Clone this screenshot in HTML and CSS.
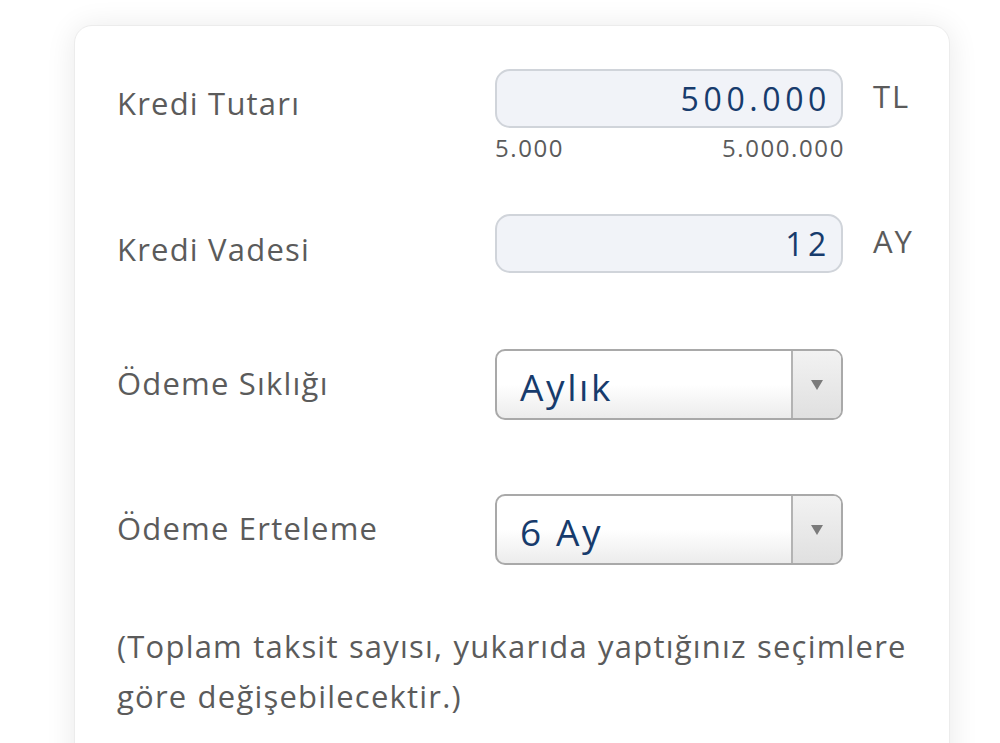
FILE: index.html
```html
<!DOCTYPE html>
<html lang="tr">
<head>
<meta charset="utf-8">
<link rel="stylesheet" href="styles.css">
</head>
<body>
<div class="card">
  <div class="row row-amount">
    <div class="label">Kredi Tutarı</div>
    <div class="control">
      <div class="input">500.000</div>
      <div class="range"><span>5.000</span><span>5.000.000</span></div>
    </div>
    <div class="unit">TL</div>
  </div>
  <div class="row row-term">
    <div class="label">Kredi Vadesi</div>
    <div class="control">
      <div class="input">12</div>
    </div>
    <div class="unit">AY</div>
  </div>
  <div class="row row-select">
    <div class="label">Ödeme Sıklığı</div>
    <div class="control">
      <div class="select"><span class="sel-text">Aylık</span><span class="sel-btn"><span class="tri"></span></span></div>
    </div>
  </div>
  <div class="row row-select">
    <div class="label">Ödeme Erteleme</div>
    <div class="control">
      <div class="select"><span class="sel-text">6 Ay</span><span class="sel-btn"><span class="tri"></span></span></div>
    </div>
  </div>
  <p class="note">(Toplam taksit sayısı, yukarıda yaptığınız seçimlere göre değişebilecektir.)</p>
</div>
</body>
</html>
```
FILE: styles.css
```css
html, body {
  margin: 0;
  padding: 0;
  background: #ffffff;
}
body {
  font-family: "Open Sans", "Liberation Sans", sans-serif;
  width: 1000px;
  height: 743px;
  overflow: hidden;
}
.card {
  margin: 25px 0 0 74px;
  width: 876px;
  height: 760px;
  box-sizing: border-box;
  border: 1px solid #ececec;
  border-radius: 18px;
  background: #fff;
  box-shadow: 0 2px 30px rgba(0,0,0,0.09);
  padding: 43px 0 0 42px;
}
.row {
  display: flex;
  align-items: flex-start;
}
.label {
  width: 378px;
  font-size: 31px;
  line-height: 40px;
  color: #5b5b5b;
  letter-spacing: 1.2px;
}
.control {
  width: 348px;
}
.unit {
  margin-left: 30px;
  font-size: 31px;
  color: #5b5b5b;
  letter-spacing: 2px;
  line-height: 1;
  margin-top: 12px;
}
.row-amount .label { margin-top: 14px; }
.input {
  height: 59px;
  box-sizing: border-box;
  border: 2px solid #d0d4da;
  border-radius: 15px;
  background: #f1f3f8;
  text-align: right;
  padding-right: 10px;
  font-size: 32px;
  letter-spacing: 4.6px;
  line-height: 56px;
  color: #173b6c;
}
.range {
  display: flex;
  justify-content: space-between;
  font-size: 24px;
  letter-spacing: 1.6px;
  color: #5b5b5b;
  margin-top: 4px;
  line-height: 32px;
}
.range span:last-child { margin-right: -2px; }
.row-term { margin-top: 50px; }
.row-term .label { margin-top: 15px; }
.row-select { margin-top: 76px; }
.row-select + .row-select { margin-top: 74px; }
.row-select .label { margin-top: 14px; }
.select {
  height: 71px;
  box-sizing: border-box;
  border: 2px solid #a9a9a9;
  border-radius: 10px;
  display: flex;
  overflow: hidden;
  background: linear-gradient(#ffffff 0%, #ffffff 50%, #ececec 100%);
}
.sel-text {
  flex: 1;
  padding-left: 23px;
  font-size: 37px;
  letter-spacing: 2.6px;
  line-height: 72px;
  color: #173b6c;
}
.sel-btn {
  width: 48px;
  border-left: 2px solid #b3b3b3;
  background: linear-gradient(#f2f2f2, #e0e0e0);
  display: flex;
  align-items: center;
  justify-content: center;
}
.tri {
  width: 0;
  height: 0;
  border-left: 6px solid transparent;
  border-right: 6px solid transparent;
  border-top: 10px solid #7b7b7b;
}
.note {
  margin: 56px 0 0 0;
  width: 800px;
  font-size: 31px;
  letter-spacing: 1.2px;
  word-spacing: 1px;
  line-height: 50px;
  color: #5b5b5b;
}
```
